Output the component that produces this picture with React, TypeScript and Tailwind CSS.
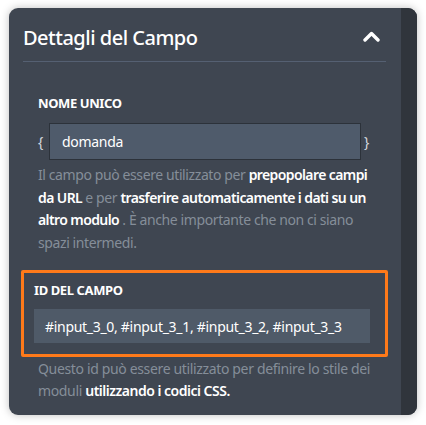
import React from "react";

const FONT = { fontFamily: '"Noto Sans", "Open Sans", sans-serif' };

function ChevronUp() {
  return (
    <svg width="17" height="11" viewBox="0 0 17 11" fill="none">
      <path d="M2 9 L8.5 2.5 L15 9" stroke="#ffffff" strokeWidth="3.4" strokeLinecap="round" strokeLinejoin="round" />
    </svg>
  );
}

export default function App() {
  return (
    <div className="w-[426px] h-[425px] bg-white pt-[8px] pl-[9px]" style={FONT}>
      <div className="flex w-[408px] h-[407px] rounded-[9px] overflow-hidden bg-[#3f4651] shadow-[0_0_8px_rgba(0,0,0,0.25)]">
        <div className="flex-1 pl-[14px] pr-[15px]">
          <div className="flex items-center justify-between h-[54px] border-b border-[#556072]">
            <h2 className="text-[20px] text-white font-medium tracking-[-0.5px] leading-none pt-[6px]">Dettagli del Campo</h2>
            <span className="mr-[6px] pt-[4px]">
              <ChevronUp />
            </span>
          </div>

          <div className="pl-[15px] pr-[8px] pt-[35px]">
            <div className="text-[13px] font-bold text-white uppercase tracking-[-0.4px] leading-none">Nome unico</div>
            <div className="flex items-center mt-[13px] text-[#d5d9df] text-[14px]">
              <span className="w-[11px]">{"{"}</span>
              <div className="w-[312px] h-[37px] bg-[#4f5b6b] border border-[#2c323a] flex items-center pl-[12px] text-white tracking-[-0.3px]">
                domanda
              </div>
              <span className="ml-[3px]">{"}"}</span>
            </div>
            <p className="mt-[4px] text-[14px] leading-[22.5px] tracking-[-0.4px] text-[#858e99]">
              Il campo può essere utilizzato per{" "}
              <b className="font-semibold text-white tracking-[-0.6px]">prepopolare campi da URL</b> e per{" "}
              <b className="font-semibold text-white tracking-[-0.6px]">trasferire automaticamente i dati su un altro modulo</b> . È anche
              importante che non ci siano spazi intermedi.
            </p>
          </div>

          <div className="mt-[16px] -ml-[2px] -mr-[2px] border-[3px] border-[#ff7a1a] rounded-[2px] pl-[10px] pr-[15px] pt-[11px] pb-[11px]">
            <div className="text-[13px] font-bold text-white uppercase tracking-[-0.4px] leading-none">ID del campo</div>
            <div className="mt-[12px] h-[34px] bg-[#4f5a68] flex items-center pl-[11px] text-[14px] tracking-[-0.3px] text-white">
              #input_3_0, #input_3_1, #input_3_2, #input_3_3
            </div>
          </div>

          <p className="px-[15px] mt-[1px] text-[14px] leading-[22px] tracking-[-0.35px] text-[#858e99]">
            Questo id può essere utilizzato per definire lo stile dei moduli{" "}
            <b className="font-semibold text-white tracking-[-0.5px]">utilizzando i codici CSS.</b>
          </p>
        </div>
        <div className="w-[16px] bg-[#30353c]" />
      </div>
    </div>
  );
}
